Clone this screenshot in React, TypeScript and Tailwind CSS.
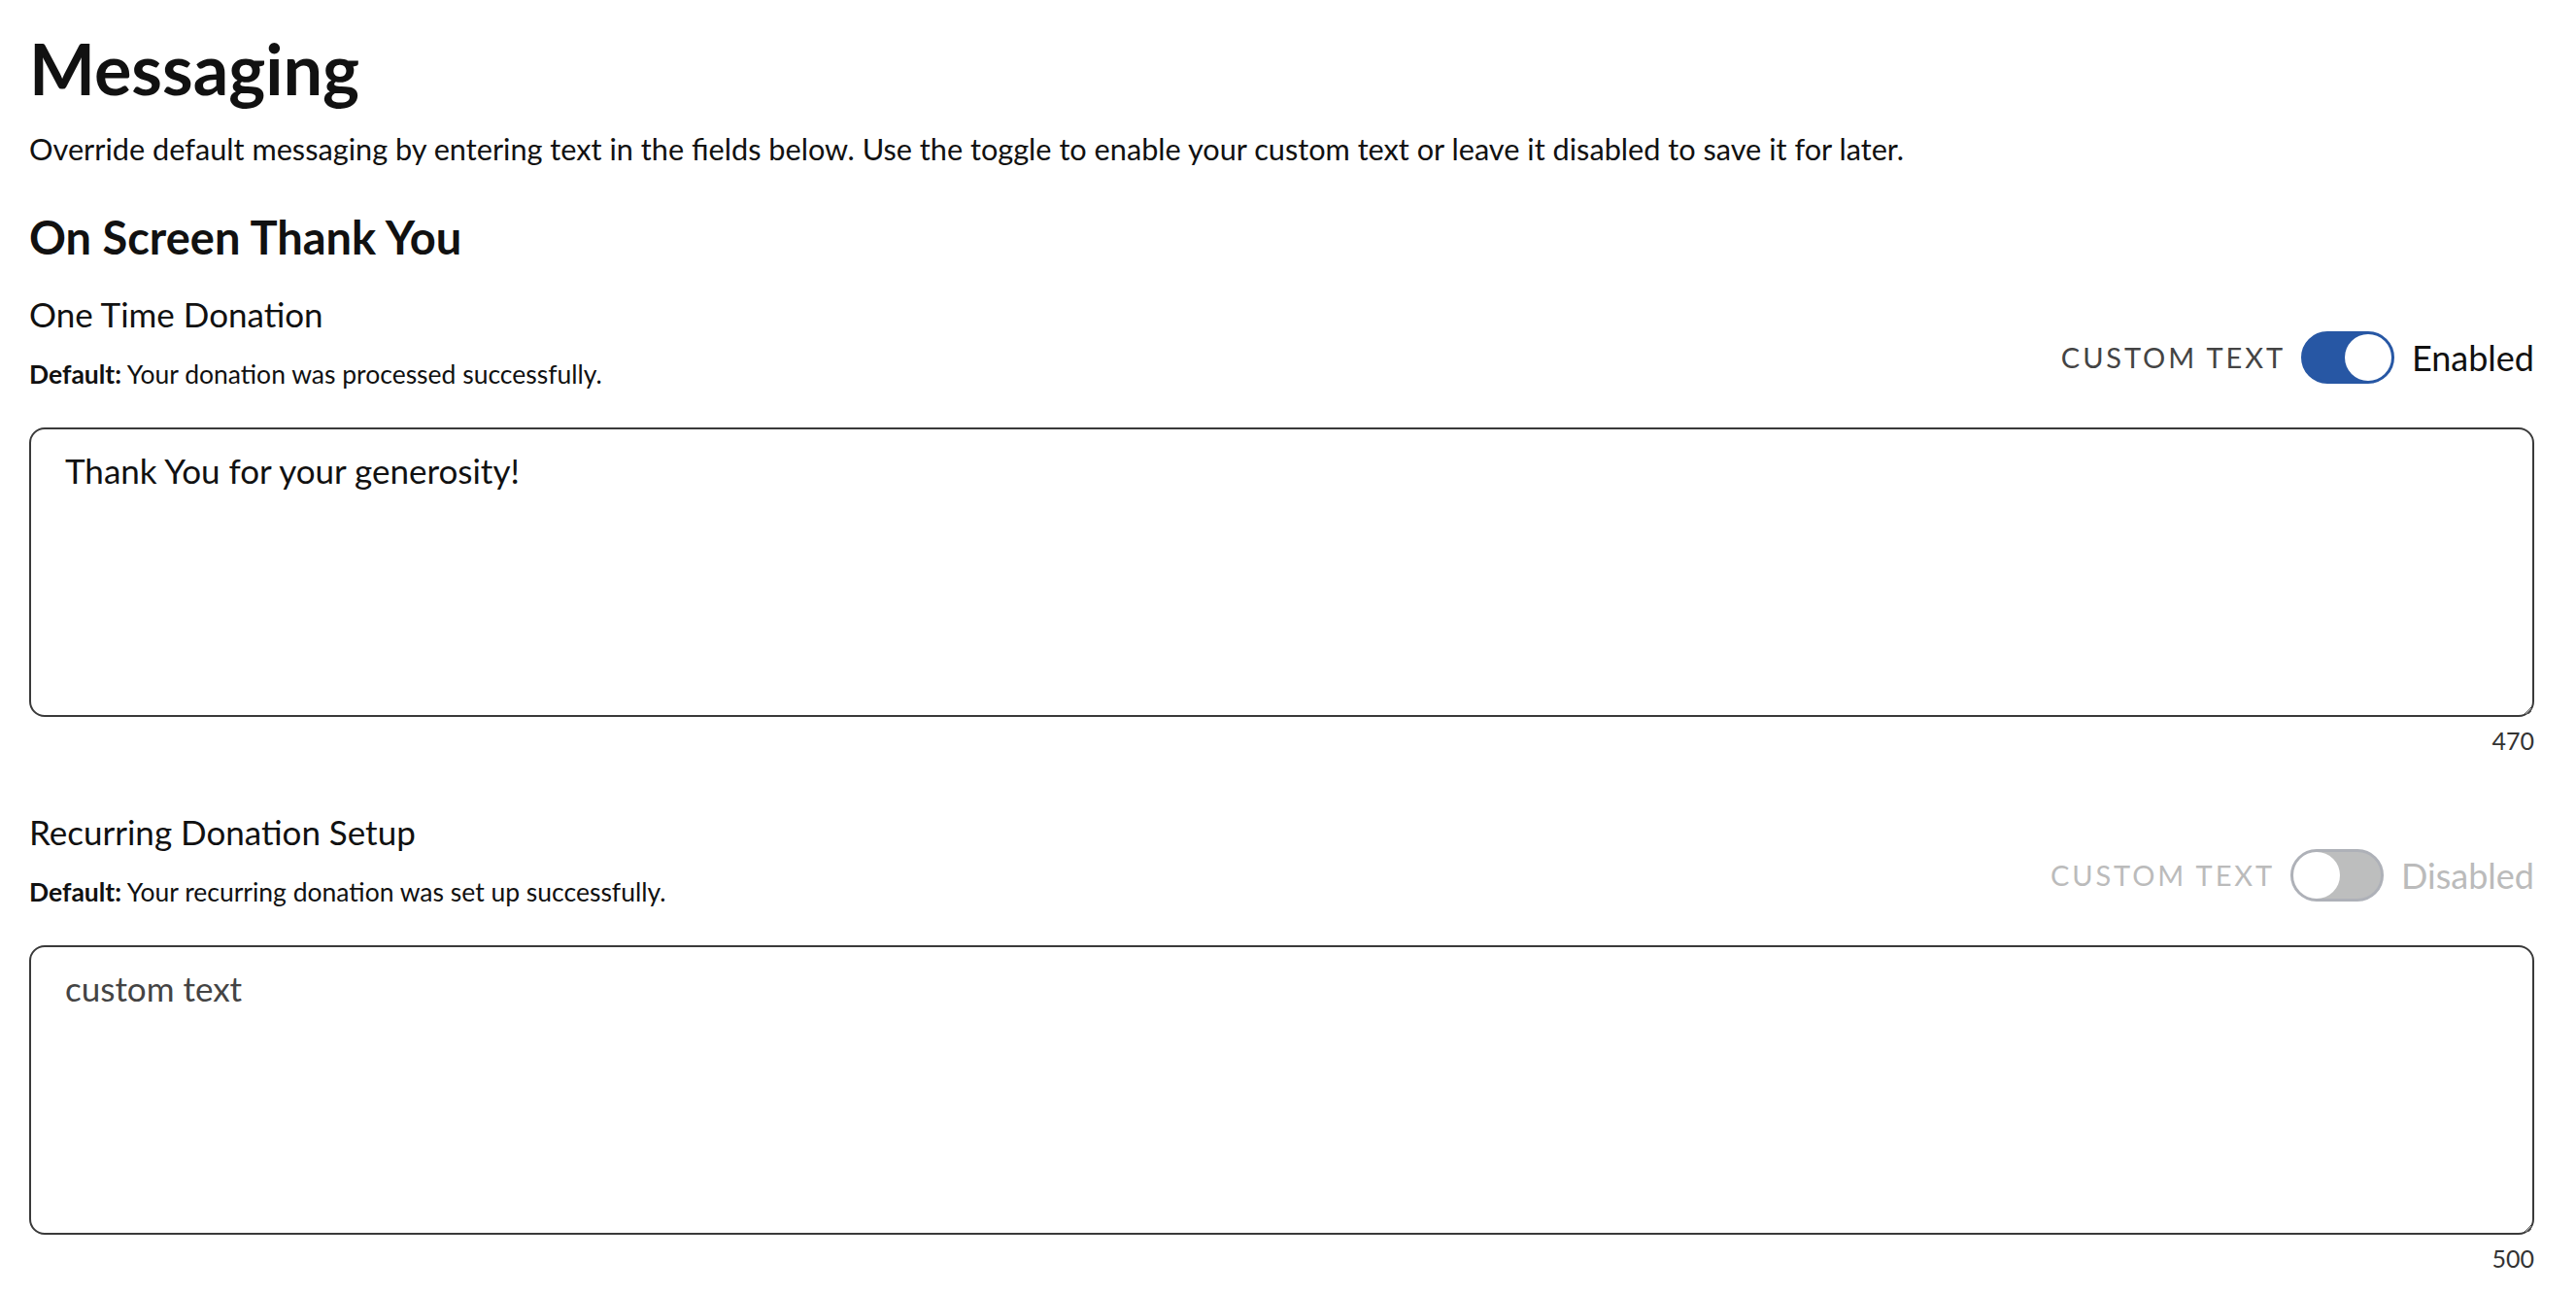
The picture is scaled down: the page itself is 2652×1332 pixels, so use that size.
import { useState } from "react";

// ── Toggle ────────────────────────────────────────────────────────────────────

const Toggle = ({ on, onChange }: { on: boolean; onChange: () => void }) => (
  <button
    type="button"
    role="switch"
    aria-checked={on}
    onClick={onChange}
    className={
      on
        ? "relative h-[54px] w-[96px] rounded-full bg-[#2757a4] border-[3px] border-[#2757a4]"
        : "relative h-[54px] w-[96px] rounded-full bg-[#bdbebe] border-[3px] border-[#aeb1b8]"
    }
  >
    <span
      className={
        on
          ? "absolute top-0 right-0 h-[48px] w-[48px] rounded-full bg-white"
          : "absolute top-0 left-0 h-[48px] w-[48px] rounded-full bg-white"
      }
    />
  </button>
);

// ── Message field ─────────────────────────────────────────────────────────────

interface MessageFieldProps {
  title: string;
  defaultText: string;
  value: string;
  enabled: boolean;
  counter: number;
}

const MessageField = ({ title, defaultText, value, enabled, counter }: MessageFieldProps) => {
  const [on, setOn] = useState(enabled);

  return (
    <section className="flex flex-col">
      <div className="flex items-center justify-between">
        <div className="flex flex-col">
          <h3 className="text-[35px] leading-[48px] text-[#111]">{title}</h3>
          <p className="mt-[20px] text-[26.5px] leading-[36px] text-[#111]">
            <span className="font-bold">Default:</span> {defaultText}
          </p>
        </div>
        <div className="flex items-center mt-[34px]">
          <span
            className={
              on
                ? "text-[29px] tracking-[0.1em] text-[#444] mr-[16px]"
                : "text-[29px] tracking-[0.1em] text-[#bbb] mr-[16px]"
            }
          >
            CUSTOM TEXT
          </span>
          <Toggle on={on} onChange={() => setOn(!on)} />
          <span
            className={
              on
                ? "ml-[18px] text-[36px] text-[#111]"
                : "ml-[18px] text-[36px] text-[#bbb]"
            }
          >
            {on ? "Enabled" : "Disabled"}
          </span>
        </div>
      </div>

      <textarea
        defaultValue={value}
        className={
          on
            ? "mt-[37px] h-[298px] w-full rounded-[16px] border-2 border-[#3a3a3a] px-[35px] pt-[18px] pb-[20px] text-[35px] leading-[48px] text-[#111] outline-none"
            : "mt-[37px] h-[298px] w-full rounded-[16px] border-2 border-[#3a3a3a] px-[35px] pt-[18px] pb-[20px] text-[35px] leading-[48px] text-[#444] outline-none"
        }
      />
      <div className="mt-[8px] text-right text-[25px] leading-[32px] text-[#333]">{counter}</div>
    </section>
  );
};

// ── Page ──────────────────────────────────────────────────────────────────────

export default function App() {
  return (
    <div
      className="min-h-screen bg-white px-[30px] pt-[28px] pr-[43px]"
      style={{ fontFamily: "Lato, 'Open Sans', sans-serif" }}
    >
      <h1 className="text-[72px] leading-[84px] font-bold text-[#111]">Messaging</h1>
      <p className="mt-[20px] text-[30.7px] leading-[44px] text-[#111]">
        Override default messaging by entering text in the fields below. Use the toggle to enable
        your custom text or leave it disabled to save it for later.
      </p>

      <h2 className="mt-[38px] text-[47px] leading-[60px] font-bold text-[#111]">
        On Screen Thank You
      </h2>

      <div className="mt-[25px] flex flex-col gap-[54px]">
        <MessageField
          title="One Time Donation"
          defaultText="Your donation was processed successfully."
          value="Thank You for your generosity!"
          enabled
          counter={470}
        />
        <MessageField
          title="Recurring Donation Setup"
          defaultText="Your recurring donation was set up successfully."
          value="custom text"
          enabled={false}
          counter={500}
        />
      </div>
    </div>
  );
}
